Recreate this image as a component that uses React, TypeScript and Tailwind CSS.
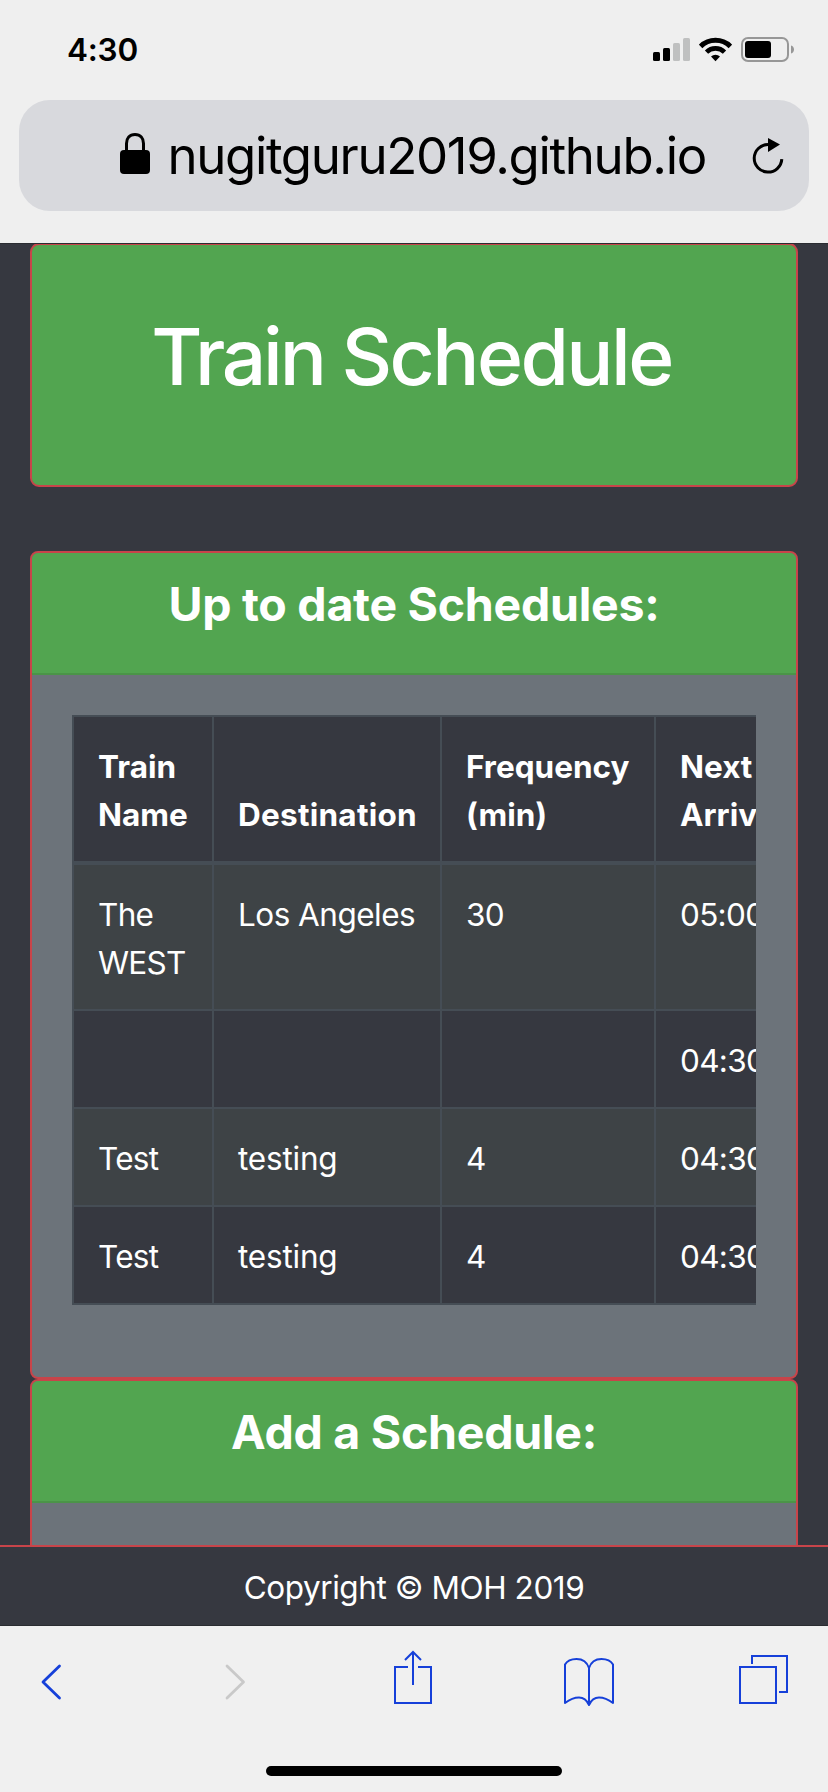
import type { ReactNode } from "react";

type Row = { name: string; destination: string; tracking: string; frequency: string; next: string };

const rows: Row[] = [
  { name: "The WEST", destination: "Los Angeles", tracking: "tracking-[-0.520px]", frequency: "30", next: "05:00" },
  { name: "", destination: "", tracking: "", frequency: "", next: "04:30" },
  { name: "Test", destination: "testing", tracking: "tracking-[-0.200px]", frequency: "4", next: "04:30" },
  { name: "Test", destination: "testing", tracking: "tracking-[-0.200px]", frequency: "4", next: "04:30" },
];

function StatusBar() {
  return (
    <div className="flex h-[100px] items-start justify-between pt-[30px] pr-[34px] pl-[67px]">
      <span className="text-[31.5px] leading-[40px] font-semibold tracking-[-0.2px]">4:30</span>
      <div className="mt-[7px] flex items-start">
        <svg width="37" height="25" viewBox="0 0 37 25">
          <rect x="0" y="15" width="7" height="9" rx="1.5" fill="#000" />
          <rect x="10" y="11" width="7" height="13" rx="1.5" fill="#000" />
          <rect x="20" y="6" width="7" height="18" rx="1.5" fill="#bfc0c0" />
          <rect x="30" y="1" width="7" height="23" rx="1.5" fill="#bfc0c0" />
        </svg>
        <svg className="ml-[9px]" width="33" height="25" viewBox="0 0 33 25">
          <path d="M1.6 9.4A21.2 21.2 0 0 1 31.4 9.4" fill="none" stroke="#000" strokeWidth="5" />
          <path d="M7.5 15.1A12.7 12.7 0 0 1 25.5 15.1" fill="none" stroke="#000" strokeWidth="4.6" />
          <path d="M16.5 24.3L12 19.6A6.5 6.5 0 0 1 21 19.6Z" fill="#000" />
        </svg>
        <svg className="ml-[9px]" width="53" height="25" viewBox="0 0 53 25">
          <rect x="1" y="1" width="46" height="23" rx="6" fill="none" stroke="#979797" strokeWidth="2" />
          <rect x="4" y="4" width="26" height="17" rx="3" fill="#000" />
          <path d="M50 8.5C52 9 53 10.8 53 12.5S52 16 50 16.5Z" fill="#979797" />
        </svg>
      </div>
    </div>
  );
}

function AddressBar() {
  return (
    <div className="mx-[19px] flex h-[111px] items-start rounded-[31px] bg-[#d8d9dd] pl-[101px]">
      <svg className="mt-[33px]" width="30" height="41" viewBox="0 0 30 41">
        <path d="M6.5 18V10.5C6.5 5 9.5 1.5 15 1.5S23.5 5 23.5 10.5V18" fill="none" stroke="#000" strokeWidth="3" />
        <rect x="0" y="17" width="30" height="24" rx="4" fill="#000" />
      </svg>
      <span className="mt-[24px] ml-[17.5px] w-[542px] text-[51px] leading-[64px] tracking-[-1.35px] whitespace-nowrap">
        nugitguru2019.github.io
      </span>
      <svg className="mt-[37px] ml-[42px]" width="32" height="38" viewBox="0 0 32 38">
        <path d="M16 7.5A13.8 13.8 0 1 0 29.8 22.1" fill="none" stroke="#000" strokeWidth="3" />
        <path d="M16 1L28 7.5L16 15Z" fill="#000" />
      </svg>
    </div>
  );
}

function Card({ title, children }: { title: string; children?: ReactNode }) {
  return (
    <section className="mx-[30px] overflow-hidden rounded-[8px] border-2 border-[#c8444a] bg-[#6c737a]">
      <h3 className="h-[122px] border-b-2 border-[#4b9448] bg-[#52a550] pt-[22px] text-center text-[46.5px] leading-[58px] font-bold tracking-[-0.27px] text-white">
        {title}
      </h3>
      {children}
    </section>
  );
}

function ScheduleTable() {
  const head = "border-t-2 border-l-2 border-[#454d55] pt-[26px] pb-[22px] pl-[24px] text-left align-bottom font-bold";
  const cell = "border-l-2 border-[#454d55] pt-[25.5px] pb-[22.5px] pl-[24px] align-top";
  return (
    <div className="mt-[40px] mb-[72px] ml-[40px] w-[684px] overflow-hidden">
      <table className="w-[760px] table-fixed border-separate border-spacing-0 border-b-2 border-[#454d55] text-[31.5px] leading-[48px] text-white">
        <colgroup>
          <col className="w-[140px]" />
          <col className="w-[228px]" />
          <col className="w-[214px]" />
          <col className="w-[178px]" />
        </colgroup>
        <thead className="bg-[#363840]">
          <tr>
            <th className={head}>Train<br />Name</th>
            <th className={head}><span className="tracking-[0.25px]">Destination</span></th>
            <th className={head}>Frequency<br />(min)</th>
            <th className={head}>Next<br />Arriv</th>
          </tr>
        </thead>
        <tbody>
          {rows.map((row, i) => {
            const top = i === 0 ? "border-t-4" : "border-t-2";
            return (
              <tr key={i} className={i % 2 === 0 ? "bg-[#3e4346]" : "bg-[#363840]"}>
                <td className={`${cell} ${top} tracking-[-0.7px]`}>{row.name}</td>
                <td className={`${cell} ${top} ${row.tracking}`}>{row.destination}</td>
                <td className={`${cell} ${top} tracking-[-0.7px]`}>{row.frequency}</td>
                <td className={`${cell} ${top} tracking-[-0.7px]`}>{row.next}</td>
              </tr>
            );
          })}
        </tbody>
      </table>
    </div>
  );
}

function Toolbar() {
  return (
    <nav className="flex h-[166px] flex-col bg-[#f0f0f0]">
      <div className="mt-[24px] flex h-[60px] pl-[40px] [&_svg]:shrink-0">
        <svg width="24" height="60" viewBox="40 1650 24 60" fill="none" stroke="#1640d9" strokeWidth="2.8" strokeLinecap="round" strokeLinejoin="round">
          <path d="M59.500 1666L43 1682L59.500 1698" />
        </svg>
        <svg className="ml-[159px]" width="24" height="60" viewBox="223 1650 24 60" fill="none" stroke="#c9c9c9" strokeWidth="2.8" strokeLinecap="round" strokeLinejoin="round">
          <path d="M227 1666L243.500 1682L227 1698" />
        </svg>
        <svg className="ml-[146px]" width="40" height="60" viewBox="393 1650 40 60" fill="none" stroke="#1640d9" strokeWidth="2">
          <path d="M408 1667H395V1703H431V1667H418M413 1685V1652M405 1660L413 1652L421 1660" />
        </svg>
        <svg className="ml-[129px]" width="54" height="60" viewBox="562 1650 54 60" fill="none" stroke="#1640d9" strokeWidth="2" strokeLinejoin="round">
          <path d="M589 1705V1668C587 1662 582 1659 576.5 1659C571 1659 567 1661 565 1664.5V1703C569 1700 574 1697.5 579 1697.5C584 1697.5 587 1700.5 589 1705C591 1700.5 594 1697.5 599 1697.5C604 1697.5 609 1700 613 1703V1664.5C611 1661 607 1659 601.5 1659C596 1659 591 1662 589 1668" />
        </svg>
        <svg className="ml-[121px]" width="54" height="60" viewBox="737 1650 54 60" fill="none" stroke="#1640d9" strokeWidth="2">
          <path d="M740 1667H776V1703H740ZM752 1664V1656H787V1692H779" />
        </svg>
      </div>
      <div className="mt-[56px] h-[10px] w-[296px] self-center rounded-full bg-black" />
    </nav>
  );
}

export default function App() {
  return (
    <div className="flex h-[1792px] w-[828px] flex-col overflow-hidden bg-[#363840] font-['Inter',sans-serif]">
      <header className="h-[243px] shrink-0 bg-[#efefef] text-black">
        <StatusBar />
        <AddressBar />
      </header>
      <main className="h-[1302px] shrink-0 overflow-hidden border-t border-[#2a2c31]">
        <div className="mx-[30px] -mt-px mb-[64px] h-[244px] rounded-[9px] border-2 border-[#c8444a] bg-[#52a550] pt-[64px] pr-[5px] text-center">
          <h1 className="text-[78.5px] leading-[96px] font-medium tracking-[-3.2px] text-white">
            Train <span className="tracking-[-2.6px]">Schedule</span>
          </h1>
        </div>
        <Card title="Up to date Schedules:">
          <ScheduleTable />
        </Card>
        <Card title="Add a Schedule:">
          <div className="h-[100px]" />
        </Card>
      </main>
      <footer className="h-[81px] shrink-0 border-t-2 border-b border-t-[#c8444a] border-b-[#2a2c31] pt-[17px] text-center text-[31.5px] leading-[48px] tracking-[-0.43px] text-white">
        Copyright © MOH 2019
      </footer>
      <Toolbar />
    </div>
  );
}
